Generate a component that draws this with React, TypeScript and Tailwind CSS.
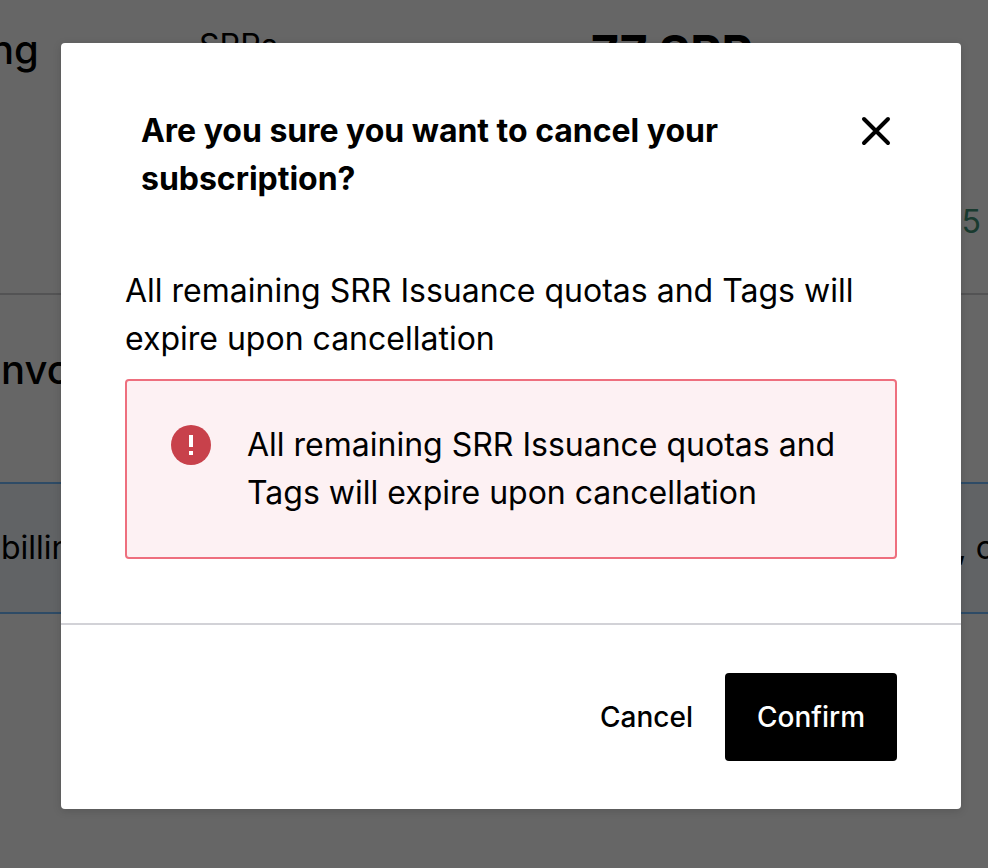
import { FC } from "react";

const BillingPage: FC = () => {
  return (
    <div className="flex h-full w-full flex-col overflow-hidden bg-white">
      <div className="flex h-[295px] flex-col border-b-2 border-[#d0d0d2]">
        <div className="flex h-[88px] items-start whitespace-nowrap">
          <div className="w-[199px] pt-5">
            <h2 className="-ml-[10px] text-[40px] leading-[60px] font-medium">
              ng
            </h2>
          </div>
          <p className="w-[392px] pt-[22px] text-[32px] leading-[48px]">SRRs</p>
          <p className="pt-[17px] text-[48px] leading-[72px] font-bold tracking-[-0.1px]">
            77 SRR
          </p>
        </div>
        <p className="mt-[110px] pr-[7px] text-right text-[32px] leading-[48px] text-[#3f9275]">
          5
        </p>
      </div>
      <div className="h-[187px] pt-[45px] pl-px">
        <h2 className="text-[40px] leading-[60px] font-medium">nvoices</h2>
      </div>
      <div className="flex h-[132px] items-center justify-between border-y-2 border-[#74bbff] bg-[#f2f7fd] pl-px text-[32px] whitespace-nowrap">
        <span>billing</span>
        <span className="-mr-[6px]">, c</span>
      </div>
    </div>
  );
};

const CloseIcon: FC = () => (
  <svg width="32" height="32" viewBox="0 0 32 32" fill="none">
    <path
      d="M4 4L28 28M28 4L4 28"
      stroke="#000"
      strokeWidth="4"
      strokeLinecap="round"
    />
  </svg>
);

const ErrorIcon: FC = () => (
  <svg
    className="mt-1 shrink-0"
    width="40"
    height="40"
    viewBox="0 0 40 40"
    fill="none"
  >
    <circle cx="20" cy="20" r="20" fill="#c8414b" />
    <path d="M18 10H22V22H18ZM18 26H22V30H18Z" fill="#fff" />
  </svg>
);

const CancelModal: FC = () => {
  return (
    <div className="flex h-[766px] w-[900px] flex-col rounded-[4px] bg-white shadow-[0_2px_8px_rgba(0,0,0,0.15)]">
      <div className="flex flex-col px-16 pt-16 pb-16">
        <div className="flex items-start justify-between pl-4">
          <h1 className="w-[620px] text-[32px] leading-[48px] font-bold tracking-[-0.02px]">
            Are you sure you want to cancel your subscription?
          </h1>
          <button className="mt-2 mr-[5px]" aria-label="Close">
            <CloseIcon />
          </button>
        </div>
        <p className="mt-16 text-[32px] leading-[48px]">
          All remaining SRR Issuance quotas and Tags will expire upon
          cancellation
        </p>
        <div className="mt-4 flex gap-9 rounded-[4px] border-2 border-[#ee6f7e] bg-[#fdf1f3] py-10 pr-10 pl-11">
          <ErrorIcon />
          <p className="text-[32px] leading-[48px]">
            All remaining SRR Issuance quotas and Tags will expire upon
            cancellation
          </p>
        </div>
      </div>
      <div className="flex flex-1 items-center justify-end gap-8 border-t-2 border-[#d2d2d7] px-16">
        <button className="text-[28px] font-medium">Cancel</button>
        <button className="h-[88px] w-[172px] rounded-[4px] bg-black text-[28px] font-medium text-white">
          Confirm
        </button>
      </div>
    </div>
  );
};

const App: FC = () => {
  return (
    <div className="relative h-[868px] w-[988px] overflow-hidden font-['Inter',sans-serif] text-black">
      <BillingPage />
      <div className="absolute inset-0 bg-black/60 pt-[43px] pl-[61px]">
        <CancelModal />
      </div>
    </div>
  );
};

export default App;
